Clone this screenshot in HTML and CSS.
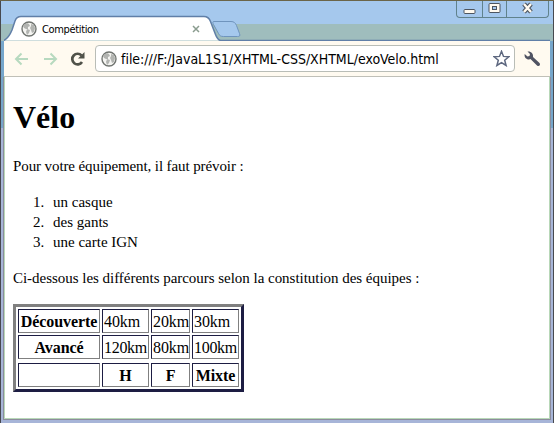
FILE: index.html
```html
<!DOCTYPE html>
<html lang="fr">
<head>
<meta charset="utf-8">
<title>Compétition</title>
<link rel="stylesheet" href="styles.css">
</head>
<body>
<svg width="0" height="0" class="defs">
  <symbol id="globe" viewBox="0 0 16 16">
    <circle cx="8" cy="8" r="7" fill="#f5f5f2" stroke="#707470" stroke-width="1.4"/>
    <path d="M3 3.500 6 2l2 1 1 2-2 1v2H5L3 7 2 5zM6 8l3 1-1 3-2 2-1-3zM10 3l3 1 1 3-1 4-2 1-1-3-1-2 1-2z" fill="#b2b4b1"/>
  </symbol>
</svg>
<div class="window">
  <header class="titlebar">
    <svg class="tabs" width="546" height="41" viewBox="0 0 546 41">
      <path d="M0 40.500C4 38 6 35 8 30l3-9c1-3 3-4.500 6-4.500h183c3 0 5 1 6.500 5l5 13c1.500 4 3 5.500 5 6z" fill="#fff"/>
      <path d="M0 40.500C4 38 6 35 8 30l3-9c1-3 3-4.500 6-4.500h183c3 0 5 1 6.500 5l5 13c1.500 4 3 5.500 5 6H546" fill="none" stroke="#607fa8" stroke-width="1.500"/>
      <path d="M210 21.500h17c3 0 4.500 1.500 5.500 4l3 8c1 2.500 0 3-2 3h-14c-3 0-4-1-5-3l-5-9c-1-2-1-3 .5-3z" fill="#a5c8ed" stroke="#6f94bd"/>
    </svg>
    <div class="tab">
      <svg width="16" height="16"><use href="#globe"/></svg>
      <span class="tab-title">Compétition</span>
      <svg class="close" width="8" height="8" viewBox="0 0 8 8"><path d="M1 1l6 6M7 1 1 7" stroke="#8a9c8f" stroke-width="1.500"/></svg>
    </div>
    <div class="controls">
      <span><svg width="13" height="15"><rect x="1" y="8.500" width="11" height="4" rx="1" fill="#fffaf0" stroke="#4d5560"/></svg></span>
      <span><svg width="13" height="15"><rect x="1" y="2.500" width="11" height="9" rx="1" fill="#fffaf0" stroke="#4d5560"/><rect x="4.500" y="5.500" width="4" height="3" fill="#a5c8ed" stroke="#4d5560"/></svg></span>
      <span><svg width="13" height="15"><path d="M3 3l7 8M10 3 3 11" stroke="#4d5560" stroke-width="4.600"/><path d="M3 3l7 8M10 3 3 11" stroke="#fffaf0" stroke-width="2.400"/></svg></span>
    </div>
  </header>
  <nav class="toolbar">
    <svg class="back" width="15" height="14" viewBox="0 0 15 14"><path d="M14 7H2M7.500 1.500 2 7l5.500 5.500" fill="none" stroke="#b7d9bf" stroke-width="2"/></svg>
    <svg class="forward" width="15" height="14" viewBox="0 0 15 14"><path d="M1 7h12M7.500 1.500 13 7l-5.500 5.500" fill="none" stroke="#b7d9bf" stroke-width="2"/></svg>
    <svg class="reload" width="15" height="14" viewBox="0 0 15 14"><path d="M11.500 3.500A5.300 5.300 0 1 0 12 10" fill="none" stroke="#505249" stroke-width="2.700"/><path d="M14.500 0v6.500H8z" fill="#505249"/></svg>
    <div class="address">
      <svg width="16" height="16"><use href="#globe"/></svg>
      <span class="url">file:///F:/JavaL1S1/XHTML-CSS/XHTML/exoVelo.html</span>
      <svg class="star" width="17" height="17" viewBox="0 0 17 17"><path d="M8.500 1.300l2 5.100 5.300.3-4.100 3.500 1.400 5.300-4.600-2.900-4.600 2.900 1.400-5.300L1.200 6.700l5.300-.3z" fill="#fff" stroke="#5e6880" stroke-width="1.500"/></svg>
    </div>
    <svg class="wrench" width="17" height="16" viewBox="0 0 17 16"><path d="M3.500.500 6 3 5.500 5 3.500 5.500.700 3C0 6 2 8.500 5 8.500l1.500-.5 6.500 6.500c2 1.500 4-.5 2.500-2.500L9 6C9.500 2.500 7 0 3.500.500z" fill="#505362"/></svg>
  </nav>
  <main class="page">
    <h1>Vélo</h1>
    <p class="intro">Pour votre équipement, il faut prévoir :</p>
    <ol>
      <li>un casque</li>
      <li>des gants</li>
      <li>une carte IGN</li>
    </ol>
    <p class="routes">Ci-dessous les différents parcours selon la constitution des équipes :</p>
    <table>
      <tbody>
        <tr><th>Découverte</th><td>40km</td><td>20km</td><td>30km</td></tr>
        <tr><th>Avancé</th><td class="long">120km</td><td>80km</td><td class="long">100km</td></tr>
        <tr><th></th><th>H</th><th>F</th><th>Mixte</th></tr>
      </tbody>
    </table>
  </main>
</div>
</body>
</html>
```
FILE: styles.css
```css
* { box-sizing: border-box; }
body { margin: 0; overflow: hidden; }
svg { display: block; flex: none; }
.defs { position: absolute; }

.window {
  width: 554px;
  height: 423px;
  padding: 0 4px 4px;
  border-top: 1px solid #6b6548;
  background:
    linear-gradient(#47494f, #47494f) left / 1px 100% no-repeat,
    linear-gradient(#47494f, #47494f) right / 1px 100% no-repeat,
    linear-gradient(#a5c8ed 0 23px, #9fbdbd 23px 40px, #76a6cb 40px 127px, #a7b5d8 127px);
}

.titlebar {
  position: relative;
  height: 40px;
  display: flex;
  justify-content: space-between;
}
.tabs { position: absolute; left: 0; top: -1px; }
.tab {
  position: relative;
  width: 200px;
  height: 24px;
  margin: 16px 0 0 17px;
  display: flex;
  align-items: center;
}
.tab-title {
  margin-left: 5px;
  font: 11px "DejaVu Sans Condensed", "DejaVu Sans", sans-serif;
  letter-spacing: -0.35px;
  color: #000;
}
.close { position: absolute; left: 171px; top: 8px; }
.controls {
  position: relative;
  display: flex;
  width: 93px;
  height: 17px;
  margin-right: 1px;
  border: 1px solid #60828c;
  border-top: 0;
  border-radius: 0 0 4px 4px;
}
.controls span {
  width: 25px;
  display: flex;
  justify-content: center;
}
.controls span + span { border-left: 1px solid #60828c; }
.controls span:last-child { width: 42px; }

.toolbar {
  height: 36px;
  display: flex;
  align-items: center;
  padding-left: 10px;
  background: #fffaf0;
  border-bottom: 1px solid #c0c0b8;
}
.forward { margin-left: 14px; }
.reload { margin-left: 12px; }
.address {
  width: 420px;
  height: 27px;
  margin-left: 10px;
  padding: 0 4px 0 5px;
  display: flex;
  align-items: center;
  background: #fff;
  border: 1px solid #b9bdb7;
  border-radius: 4px;
}
.url {
  margin-left: 4px;
  font: 14px/20px "DejaVu Sans Condensed", "DejaVu Sans", sans-serif;
  letter-spacing: -0.02px;
  white-space: nowrap;
}
.star { margin-left: auto; }
.wrench { margin-left: 9px; }

.page {
  height: 342px;
  padding: 22px 8px 0;
  background: #fff;
  border: solid #b8d8b8;
  border-width: 0 1px 1px;
  outline: 1px solid #8c8c9c;
  clip-path: inset(0 -1px -1px -1px);
  font: 15px/20px "Liberation Serif", serif;
  color: #000;
}
h1 { margin: 0; font-size: 32px; line-height: 36px; }
p { margin: 0; white-space: nowrap; }
.intro { margin-top: 21px; letter-spacing: -0.1px; }
ol {
  margin: 16px 0;
  padding-left: 20px;
  list-style: none;
  counter-reset: step;
}
li { counter-increment: step; }
li::before {
  content: counter(step) ".";
  display: inline-block;
  width: 20px;
}
.routes { letter-spacing: -0.03px; }

table {
  display: block;
  width: 231px;
  height: 88px;
  margin-top: 16px;
  padding: 2px;
  border: 3px solid;
  border-color: #808080 #1d1d43 #1d1d43 #808080;
}
tbody { display: block; }
tr { display: grid; grid-template-columns: 82px 47px 39px 47px; gap: 2px; height: 24px; margin-bottom: 2px; }
tr:last-child { margin-top: 4px; }
td, th {
  padding: 2px 1px 0;
  border: 1px solid;
  border-color: #1d1d43 #808080 #808080 #1d1d43;
  font-size: 16px;
  line-height: 20px;
  white-space: nowrap;
  letter-spacing: -0.1px;
}
.long { letter-spacing: -0.3px; }
```
